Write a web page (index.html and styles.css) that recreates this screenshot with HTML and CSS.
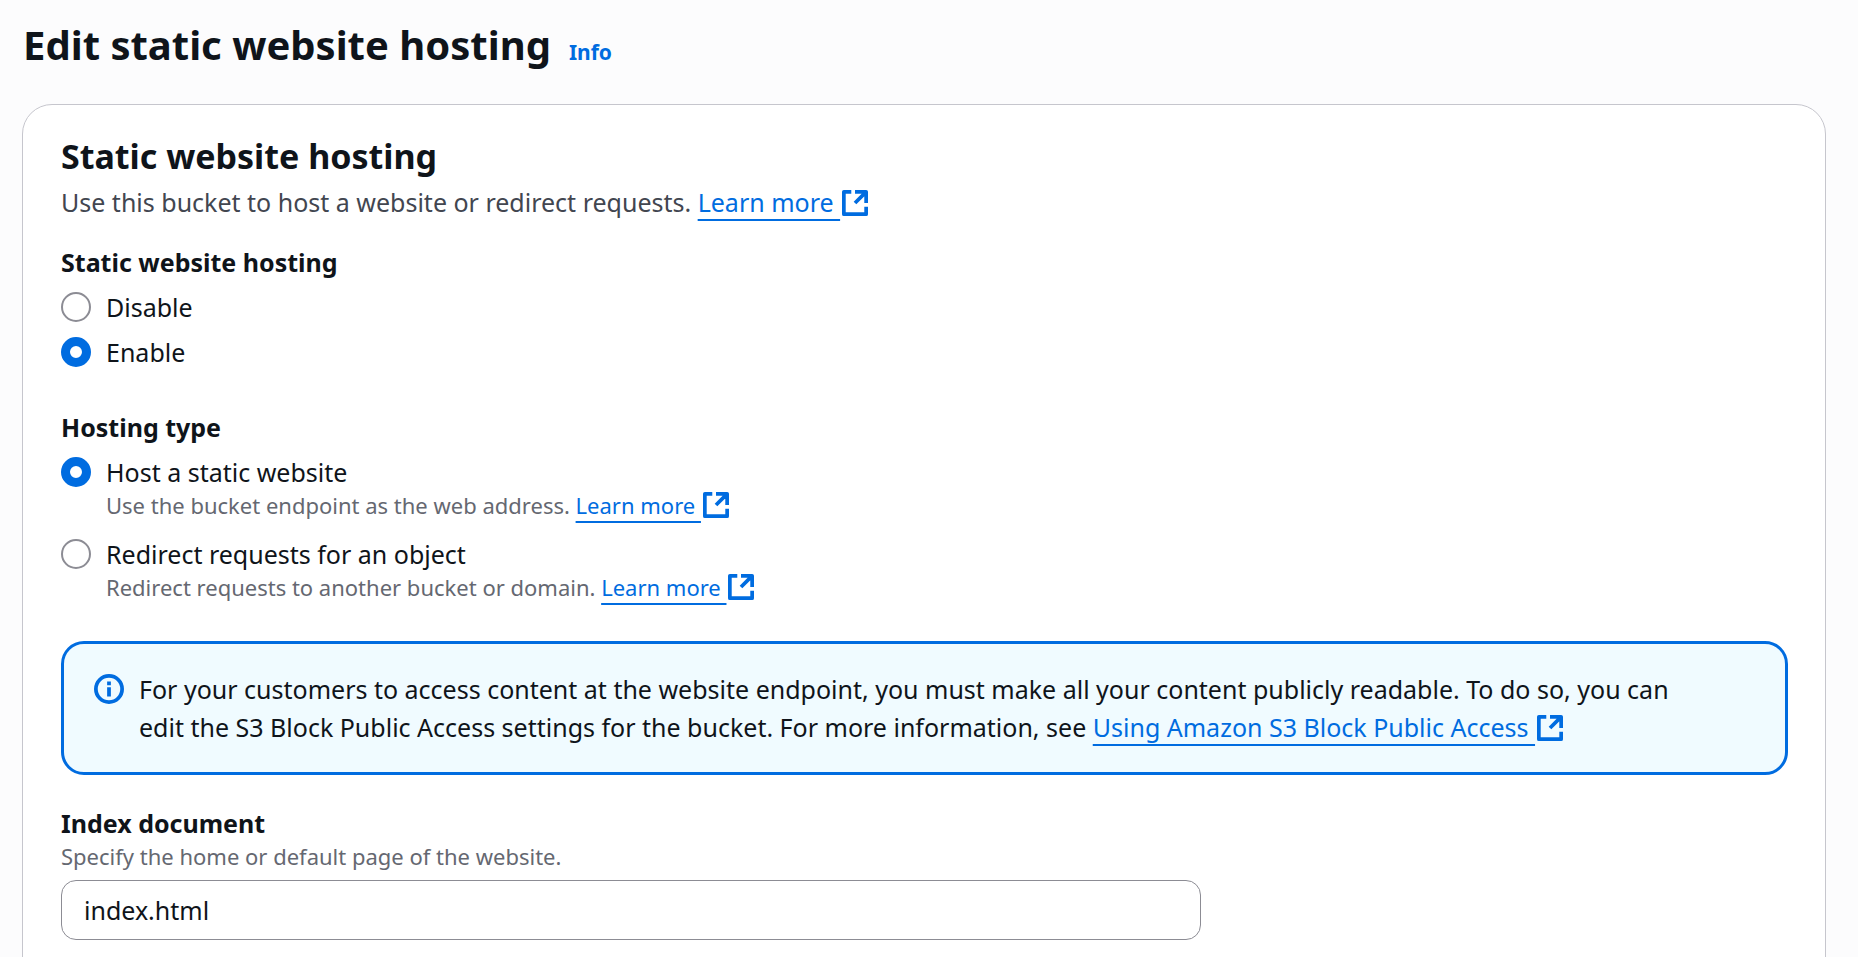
FILE: index.html
```html
<!DOCTYPE html>
<html lang="en">
<head>
<meta charset="utf-8">
<title>Edit static website hosting</title>
<link rel="stylesheet" href="styles.css">
</head>
<body>
<svg class="sprite" aria-hidden="true">
  <symbol id="external" viewBox="1 1 14 14">
    <path d="M8 2h6v6M6 2H2v12h12v-4M14 2 8 8" fill="none" stroke="currentColor" stroke-width="2" stroke-linejoin="round"/>
  </symbol>
</svg>
<main class="page">
  <header class="page-header">
    <h1 class="page-title">Edit static website hosting</h1>
    <a class="info-link" href="#">Info</a>
  </header>
  <section class="card">
    <h2 class="card-title">Static website hosting</h2>
    <p class="card-description">Use this bucket to host a website or redirect requests. <a class="link" href="#">Learn more&nbsp;</a><svg class="external-icon"><use href="#external"/></svg></p>

    <fieldset class="group">
      <legend class="group-label">Static website hosting</legend>
      <div class="option">
        <input class="radio" type="radio" name="hosting" id="disable">
        <label for="disable">Disable</label>
      </div>
      <div class="option">
        <input class="radio" type="radio" name="hosting" id="enable" checked>
        <label for="enable">Enable</label>
      </div>
    </fieldset>

    <fieldset class="group">
      <legend class="group-label">Hosting type</legend>
      <div class="option">
        <input class="radio" type="radio" name="type" id="host" checked>
        <div>
          <label for="host">Host a static website</label>
          <p class="hint">Use the bucket endpoint as the web address. <a class="link" href="#">Learn more&nbsp;</a><svg class="external-icon"><use href="#external"/></svg></p>
        </div>
      </div>
      <div class="option option-spaced">
        <input class="radio" type="radio" name="type" id="redirect">
        <div>
          <label for="redirect">Redirect requests for an object</label>
          <p class="hint">Redirect requests to another bucket or domain. <a class="link" href="#">Learn more&nbsp;</a><svg class="external-icon"><use href="#external"/></svg></p>
        </div>
      </div>
    </fieldset>

    <div class="alert">
      <svg class="alert-icon" viewBox="0 0 16 16" aria-hidden="true">
        <circle cx="8" cy="8" r="7" fill="none" stroke="currentColor" stroke-width="2"/>
        <path d="M8 7v5M8 4v2" stroke="currentColor" stroke-width="2"/>
      </svg>
      <p>For your customers to access content at the website endpoint, you must make all your content publicly readable. To do so, you can edit the S3 Block Public Access settings for the bucket. For more information, see <a class="link" href="#">Using Amazon S3 Block Public Access&nbsp;</a><svg class="external-icon"><use href="#external"/></svg></p>
    </div>

    <div class="field">
      <label class="group-label" for="index">Index document</label>
      <p class="hint" id="index-hint">Specify the home or default page of the website.</p>
      <input class="text-input" type="text" id="index" value="index.html" aria-describedby="index-hint">
    </div>
  </section>
</main>
</body>
</html>
```
FILE: styles.css
```css
* { box-sizing: border-box; }
body {
  margin: 0;
  background: #fcfcfd;
  color: #0f141a;
  font: 25px/38px "Noto Sans", sans-serif;
}
h1, h2, p, fieldset, legend { margin: 0; padding: 0; border: 0; }
.sprite { display: none; }
.page { padding: 16px 32px 0 22px; }
.page-header {
  display: flex;
  align-items: baseline;
  gap: 18px;
  padding-left: 1px;
}
.page-title { font-size: 40px; line-height: 58px; font-weight: 700; }
.info-link {
  color: #006ce0;
  font-size: 21px;
  font-weight: 700;
  text-decoration: none;
}
.card {
  margin-top: 30px;
  padding: 28px 37px 40px 38px;
  min-height: 900px;
  background: #fff;
  border: 1px solid #c6c6cd;
  border-radius: 30px;
}
.card-title { font-size: 34px; line-height: 46px; font-weight: 700; }
.card-description { margin-top: 4px; color: #424650; }
.link {
  color: #006ce0;
  text-decoration: underline;
  text-decoration-thickness: 2px;
  text-underline-offset: 7px;
}
.external-icon {
  width: 26px;
  height: 26px;
  margin-left: 2px;
  color: #006ce0;
  vertical-align: -4px;
}
.group { margin-top: 22px; }
.group + .group { margin-top: 37px; }
.group-label { display: block; font-weight: 700; }
.option {
  display: flex;
  align-items: flex-start;
  gap: 15px;
  margin-top: 7px;
}
.option-spaced { margin-top: 16px; }
.option label { display: block; }
.radio {
  appearance: none;
  flex: none;
  width: 30px;
  height: 30px;
  margin: 4px 0 0;
  border: 2px solid #8c8c94;
  border-radius: 50%;
  background: #fff;
}
.radio:checked { border: 9px solid #006ce0; }
.hint { color: #656871; font-size: 22px; line-height: 28px; }
.alert {
  display: flex;
  gap: 15px;
  margin-top: 40px;
  padding: 26px 90px 26px 30px;
  background: #f0fbff;
  border: 3px solid #006ce0;
  border-radius: 23px;
}
.alert-icon {
  flex: none;
  width: 30px;
  height: 30px;
  margin-top: 4px;
  color: #006ce0;
}
.field { margin-top: 29px; }
.text-input {
  display: block;
  width: 66%;
  height: 60px;
  margin-top: 10px;
  padding: 0 22px;
  color: inherit;
  font: inherit;
  background: #fff;
  border: 1px solid #8c8c94;
  border-radius: 15px;
}
```
